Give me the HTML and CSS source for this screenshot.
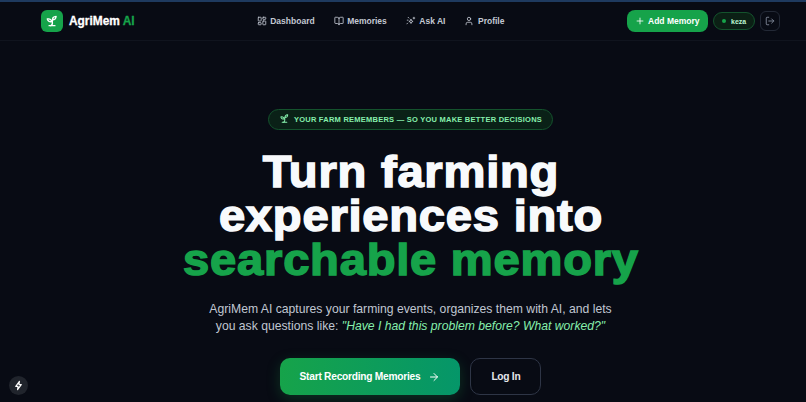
FILE: index.html
```html
<!DOCTYPE html>
<html lang="en">
<head>
  <meta charset="UTF-8" />
  <title>AgriMem AI</title>
  <link rel="stylesheet" href="styles.css">
</head>
<body>

  <header class="navbar">
    <a class="brand">
      <span class="brand-icon">
        <svg width="14" height="14" viewBox="0 0 24 24" fill="none" stroke="currentColor" stroke-width="2.4" stroke-linecap="round" stroke-linejoin="round"><path d="M7 20h10"/><path d="M10 20c5.500-2.500.8-6.400 3-10"/><path d="M9.500 9.400c1.100.8 1.800 2.200 2.300 3.700-2 .4-3.500.4-4.800-.3-1.200-.6-2.300-1.900-3-4.200 2.800-.5 4.400 0 5.500.8z"/><path d="M14.100 6a7 7 0 0 0-1.100 4c1.900-.1 3.300-.6 4.300-1.400 1-1 1.600-2.300 1.700-4.600-2.700.1-4 1-4.900 2z"/></svg>
      </span>
      <span class="brand-name">AgriMem <em>AI</em></span>
    </a>

    <nav class="nav-links">
      <a>
        <svg width="10" height="10" viewBox="0 0 24 24" fill="none" stroke="currentColor" stroke-width="2" stroke-linecap="round" stroke-linejoin="round"><rect x="3" y="3" width="7" height="9" rx="1"/><rect x="14" y="3" width="7" height="5" rx="1"/><rect x="14" y="12" width="7" height="9" rx="1"/><rect x="3" y="16" width="7" height="5" rx="1"/></svg>
        Dashboard
      </a>
      <a>
        <svg width="10" height="10" viewBox="0 0 24 24" fill="none" stroke="currentColor" stroke-width="2" stroke-linecap="round" stroke-linejoin="round"><path d="M12 7v14"/><path d="M3 18a1 1 0 0 1-1-1V4a1 1 0 0 1 1-1h5a4 4 0 0 1 4 4 4 4 0 0 1 4-4h5a1 1 0 0 1 1 1v13a1 1 0 0 1-1 1h-6a3 3 0 0 0-3 3 3 3 0 0 0-3-3z"/></svg>
        Memories
      </a>
      <a>
        <svg width="10" height="10" viewBox="0 0 24 24" fill="none" stroke="currentColor" stroke-width="2" stroke-linecap="round" stroke-linejoin="round"><path d="M12 8l1.500 3.500L17 13l-3.500 1.500L12 18l-1.500-3.500L7 13l3.500-1.500z"/><path d="M19 3v4"/><path d="M17 5h4"/><path d="M4 17l-2 2"/><path d="M7 5l-2-2"/><path d="M5 10H3"/></svg>
        Ask AI
      </a>
      <a>
        <svg width="10" height="10" viewBox="0 0 24 24" fill="none" stroke="currentColor" stroke-width="2" stroke-linecap="round" stroke-linejoin="round"><path d="M19 21v-2a4 4 0 0 0-4-4H9a4 4 0 0 0-4 4v2"/><circle cx="12" cy="7" r="4"/></svg>
        Profile
      </a>
    </nav>

    <div class="nav-actions">
      <a class="add-btn">
        <svg width="10" height="10" viewBox="0 0 24 24" fill="none" stroke="currentColor" stroke-width="2" stroke-linecap="round"><path d="M5 12h14"/><path d="M12 5v14"/></svg>
        Add Memory
      </a>
      <span class="user-pill"><i class="dot"></i>keza</span>
      <a class="logout">
        <svg width="10" height="10" viewBox="0 0 24 24" fill="none" stroke="currentColor" stroke-width="2" stroke-linecap="round" stroke-linejoin="round"><path d="M9 21H5a2 2 0 0 1-2-2V5a2 2 0 0 1 2-2h4"/><path d="M16 17l5-5-5-5"/><path d="M21 12H9"/></svg>
      </a>
    </div>
  </header>

  <main class="hero">
    <div class="tagline">
      <svg class="tagline-icon" width="11" height="11" viewBox="0 0 24 24" fill="none" stroke="currentColor" stroke-width="2.200" stroke-linecap="round" stroke-linejoin="round"><path d="M7 20h10"/><path d="M10 20c5.500-2.500.8-6.400 3-10"/><path d="M9.500 9.400c1.100.8 1.800 2.200 2.300 3.700-2 .4-3.500.4-4.800-.3-1.200-.6-2.300-1.900-3-4.200 2.800-.5 4.400 0 5.500.8z"/><path d="M14.100 6a7 7 0 0 0-1.100 4c1.900-.1 3.300-.6 4.300-1.400 1-1 1.600-2.300 1.700-4.600-2.700.1-4 1-4.900 2z"/></svg>
      <span>YOUR FARM REMEMBERS — SO YOU MAKE BETTER DECISIONS</span>
    </div>

    <h1>Turn farming<br>experiences into<br><span class="accent">searchable memory</span></h1>

    <p class="lead">AgriMem AI captures your farming events, organizes them with AI, and lets<br>you ask questions like: <em>"Have I had this problem before? What worked?"</em></p>

    <div class="cta-row">
      <a class="cta-primary">
        Start Recording Memories
        <svg width="12" height="12" viewBox="0 0 24 24" fill="none" stroke="currentColor" stroke-width="2" stroke-linecap="round" stroke-linejoin="round"><path d="M5 12h14"/><path d="M12 5l7 7-7 7"/></svg>
      </a>
      <a class="cta-secondary">Log In</a>
    </div>
  </main>

  <div class="dev-badge">
    <svg width="11" height="11" viewBox="0 0 24 24" fill="none" stroke="currentColor" stroke-width="2.500" stroke-linejoin="round"><path d="M14 3L6 14h5l-1 7 8-11h-5z"/></svg>
  </div>

</body>
</html>
```

FILE: styles.css
```css
html, body {
  margin: 0;
  padding: 0;
  height: 100%;
  overflow: hidden;
  background: #080b14;
  color: white;
  font-family: 'Liberation Sans', Arial, sans-serif;
}

.navbar {
  height: 41px;
  box-sizing: border-box;
  border-top: 2px solid #1e3a5f;
  border-bottom: 1px solid #10141e;
  padding: 0 26px 0 41px;
  display: flex;
  align-items: center;
  justify-content: space-between;
}

.brand {
  display: flex;
  align-items: center;
  gap: 6px;
}

.brand-icon {
  width: 22px;
  height: 22px;
  border-radius: 6px;
  background: #16a34a;
  display: flex;
  align-items: center;
  justify-content: center;
}

.brand-name {
  font-size: 11.900px;
  font-weight: 700;
  -webkit-text-stroke: 0.3px;
}

.brand-name em {
  font-style: normal;
  color: #16a34a;
}

.nav-links {
  display: flex;
  gap: 19px;
}

.nav-links a {
  display: flex;
  align-items: center;
  gap: 3.500px;
  font-size: 8.500px;
  font-weight: 700;
  color: #c3c8d2;
}

.nav-actions {
  display: flex;
  align-items: center;
  gap: 5px;
}

.add-btn {
  display: flex;
  align-items: center;
  gap: 3px;
  height: 22px;
  padding: 0 8.500px;
  border-radius: 8px;
  background: #16a34a;
  font-size: 8.500px;
  font-weight: 700;
}

.user-pill {
  display: flex;
  align-items: center;
  gap: 5px;
  height: 18px;
  padding: 0 8px;
  box-sizing: border-box;
  width: 42px;
  border: 1px solid #14532d;
  border-radius: 10px;
  background: #0b2015;
  font-size: 7px;
  font-weight: 700;
  color: #bbf7d0;
}

.dot {
  width: 4px;
  height: 4px;
  border-radius: 50%;
  background: #16a34a;
  flex: none;
}

.logout {
  width: 20px;
  height: 20px;
  box-sizing: border-box;
  border: 1px solid #232936;
  border-radius: 6px;
  color: #8a93a3;
  display: flex;
  align-items: center;
  justify-content: center;
}

.hero {
  display: flex;
  flex-direction: column;
  align-items: center;
  padding: 68px 0 0 15px;
  text-align: center;
}

.tagline {
  display: flex;
  align-items: center;
  gap: 4px;
  height: 21px;
  box-sizing: border-box;
  padding: 0 10px;
  border: 1px solid #14532d;
  border-radius: 11px;
  background: #0a2117;
  color: #86efac;
  font-size: 7.500px;
  font-weight: 700;
  letter-spacing: 0.240px;
}

.tagline-icon {
  margin-top: -3px;
}

h1 {
  margin: 20px 0 0;
  font-size: 44.500px;
  line-height: 44px;
  font-weight: 700;
  letter-spacing: 0.700px;
  -webkit-text-stroke: 1.500px;
  transform: scaleX(1.06);
  color: #f8fafc;
}

.accent {
  color: #16a34a;
}

.lead {
  margin: 19px 0 0;
  font-size: 12.200px;
  line-height: 17px;
  color: #c0c7d2;
}

.lead em {
  color: #86efac;
}

.cta-row {
  display: flex;
  gap: 10px;
  margin-top: 23px;
}

.cta-primary {
  display: flex;
  align-items: center;
  gap: 8px;
  height: 37px;
  padding: 0 20px;
  border-radius: 10px;
  background: linear-gradient(90deg, #16a34a, #059669);
  box-shadow: 0 4px 14px rgba(22, 163, 74, 0.25);
  font-size: 10.200px;
  letter-spacing: -0.250px;
  font-weight: 700;
}

.cta-secondary {
  display: flex;
  align-items: center;
  height: 37px;
  box-sizing: border-box;
  padding: 0 20px;
  border: 1px solid #2e3546;
  border-radius: 10px;
  font-size: 10.200px;
  letter-spacing: -0.250px;
  font-weight: 700;
  color: #e5e7eb;
}

.dev-badge {
  position: fixed;
  left: 9px;
  bottom: 7px;
  width: 19px;
  height: 19px;
  border-radius: 50%;
  background: #20242c;
  display: flex;
  align-items: center;
  justify-content: center;
}
```
